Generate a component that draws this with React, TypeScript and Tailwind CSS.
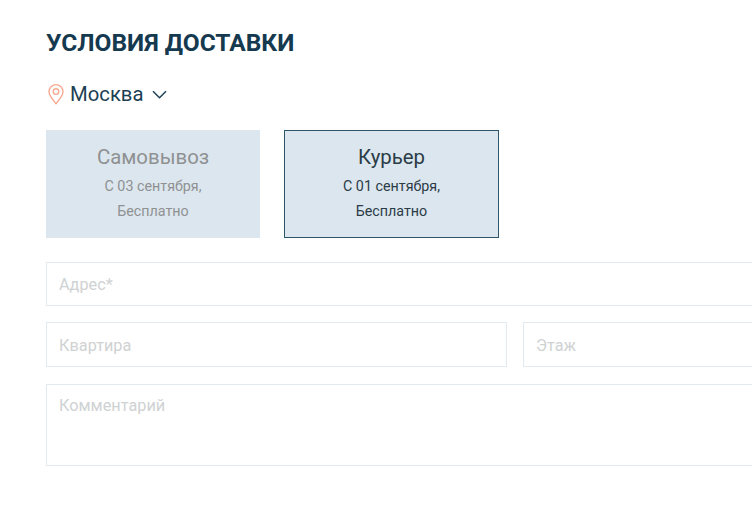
import React from 'react';

const DeliveryCard = ({ title, date, price, active, className }: { title: string; date: string; price: string; active?: boolean; className: string }) => (
  <div
    className={`h-[108px] bg-[#dce6ee] border flex flex-col items-center pt-[13px] ${className} ${
      active ? 'border-[#2f556c] text-[#2b3c47]' : 'border-[#dce6ee] text-[#8f9192]'
    }`}
  >
    <div className="text-[20.4px] leading-[26px]">{title}</div>
    <div className="text-[14.3px] leading-[24px] mt-[4px]">{date}</div>
    <div className="text-[14.3px] leading-[24px] mt-[1px]">{price}</div>
  </div>
);

const Field = ({ label, className }: { label: string; className: string }) => (
  <div className={`border border-[#e3e9f0] bg-white pl-[12px] text-[16.3px] text-[#cfd2d3] ${className}`}>
    {label}
  </div>
);

const App: React.FC = () => {
  return (
    <div className="w-[752px] h-[510px] overflow-hidden bg-white pl-[46px] pt-[27px] font-['Roboto',sans-serif]">
      <div className="w-[760px]">
        <h1 className="text-[24.5px] leading-[32px] font-bold text-[#15394f]">УСЛОВИЯ ДОСТАВКИ</h1>

        <div className="flex items-center mt-[19px] h-[32px] text-[#1c3f55]">
          <svg width="20" height="22" viewBox="0 0 20 22" fill="none" stroke="#f6ab92" strokeWidth="1.4">
            <path d="M10 20.6C6.8 16.9 3 12.8 3 8.6a7 7 0 0 1 14 0C17 12.8 13.2 16.9 10 20.6Z" />
            <circle cx="10" cy="8.6" r="2.8" />
          </svg>
          <span className="ml-[4px] text-[20.3px] leading-[32px]">Москва</span>
          <svg width="15" height="9" viewBox="0 0 15 9" fill="none" stroke="#1c3f55" strokeWidth="1.5" className="ml-[9px]">
            <path d="M1 1.2 7.5 7.7 14 1.2" />
          </svg>
        </div>

        <div className="flex gap-[24px] mt-[20px]">
          <DeliveryCard className="w-[214px]" title="Самовывоз" date="С 03 сентября," price="Бесплатно" />
          <DeliveryCard className="w-[215px]" title="Курьер" date="С 01 сентября," price="Бесплатно" active />
        </div>

        <div className="flex flex-col mt-[24px]">
          <Field label="Адрес*" className="h-[44px] w-full leading-[44px]" />
          <div className="flex gap-[16px] mt-[16px]">
            <Field label="Квартира" className="h-[45px] w-[461px] leading-[46px]" />
            <Field label="Этаж" className="h-[45px] flex-1 leading-[46px]" />
          </div>
          <Field label="Комментарий" className="h-[82px] w-full mt-[17px] leading-[42px]" />
        </div>
      </div>
    </div>
  );
};

export default App;
